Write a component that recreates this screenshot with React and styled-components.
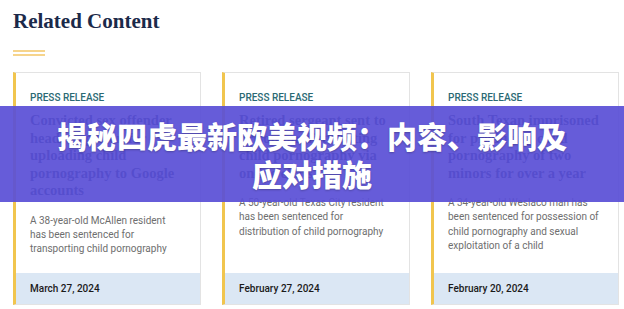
import styled, { createGlobalStyle } from "styled-components";

const GlobalStyle = createGlobalStyle`
  html, body {
    margin: 0;
    padding: 0;
    background: #fff;
  }
  body {
    font-family: Roboto, "Liberation Sans", sans-serif;
  }
`;

const Page = styled.div`
  position: relative;
  width: 624px;
  height: 309px;
  overflow: hidden;
  padding: 6px 0 0 13px;
  box-sizing: border-box;
`;

const Title = styled.h2`
  margin: 0;
  font-family: "Liberation Serif", serif;
  font-weight: 700;
  font-size: 21px;
  line-height: 30px;
  color: #1b2a4a;
`;

// двойная золотая черта под заголовком
const Rule = styled.div`
  width: 32px;
  height: 6px;
  margin: 14px 0 16px;
  border-top: 2px solid #f6d48c;
  border-bottom: 2px solid #f6d48c;
  box-sizing: border-box;
`;

const Grid = styled.div`
  display: grid;
  grid-template-columns: repeat(3, 188px);
  column-gap: 21px;
  align-items: stretch;
`;

const Card = styled.article`
  display: flex;
  flex-direction: column;
  border: 1px solid #e3e3e3;
  border-left: 3px solid #f1c54e;
  background: #fff;
  height: 233px;
  box-sizing: border-box;
`;

const Body = styled.div`
  padding: 18px 12px 0 14px;
  flex: 1;
`;

const Label = styled.div`
  font-size: 10px;
  font-weight: 500;
  line-height: 14px;
  color: #2b6a74;
  text-transform: uppercase;
`;

const Heading = styled.h3`
  margin: 7px 0 0;
  font-family: "Liberation Serif", serif;
  font-weight: 700;
  font-size: 14.5px;
  line-height: 17.5px;
  color: #162e51;
`;

const Desc = styled.p`
  margin: 14px 6px 0 0;
  font-size: 10px;
  line-height: 14.3px;
  color: #6e6e6e;
`;

const Footer = styled.div`
  height: 31px;
  display: flex;
  align-items: center;
  padding-left: 14px;
  background: #dbe7f4;
  font-size: 10px;
  font-weight: 500;
  color: #1b1b1b;
`;

const Banner = styled.div`
  position: absolute;
  left: 0;
  right: 0;
  top: 106px;
  height: 96px;
  display: flex;
  align-items: center;
  justify-content: center;
  background: rgba(90, 80, 214, 0.93);
`;

const BannerText = styled.h1`
  margin: 0;
  width: 515px;
  text-align: center;
  font-family: "Noto Sans CJK SC", sans-serif;
  font-weight: 800;
  font-size: 30px;
  line-height: 38px;
  color: #fff;
  text-shadow: 0 1px 2px rgba(0, 0, 0, 0.25);
`;

const items = [
  {
    title: "Convicted sex offender heads to prison for uploading child pornography to Google accounts",
    text: "A 38-year-old McAllen resident has been sentenced for transporting child pornography",
    date: "March 27, 2024",
  },
  {
    title: "Retired sergeant sent to prison for distributing child pornography via online chats",
    text: "A 50-year-old Texas City resident has been sentenced for distribution of child pornography",
    date: "February 27, 2024",
  },
  {
    title: "South Texan imprisoned for producing child pornography of two minors for over a year",
    text: "A 34-year-old Weslaco man has been sentenced for possession of child pornography and sexual exploitation of a child",
    date: "February 20, 2024",
  },
];

export default function App() {
  return (
    <>
      <GlobalStyle />
      <Page>
        <Title>Related Content</Title>
        <Rule />
        <Grid>
          {items.map((item) => (
            <Card key={item.date}>
              <Body>
                <Label>Press Release</Label>
                <Heading>{item.title}</Heading>
                <Desc>{item.text}</Desc>
              </Body>
              <Footer>{item.date}</Footer>
            </Card>
          ))}
        </Grid>
        <Banner>
          <BannerText>揭秘四虎最新欧美视频：内容、影响及应对措施</BannerText>
        </Banner>
      </Page>
    </>
  );
}
